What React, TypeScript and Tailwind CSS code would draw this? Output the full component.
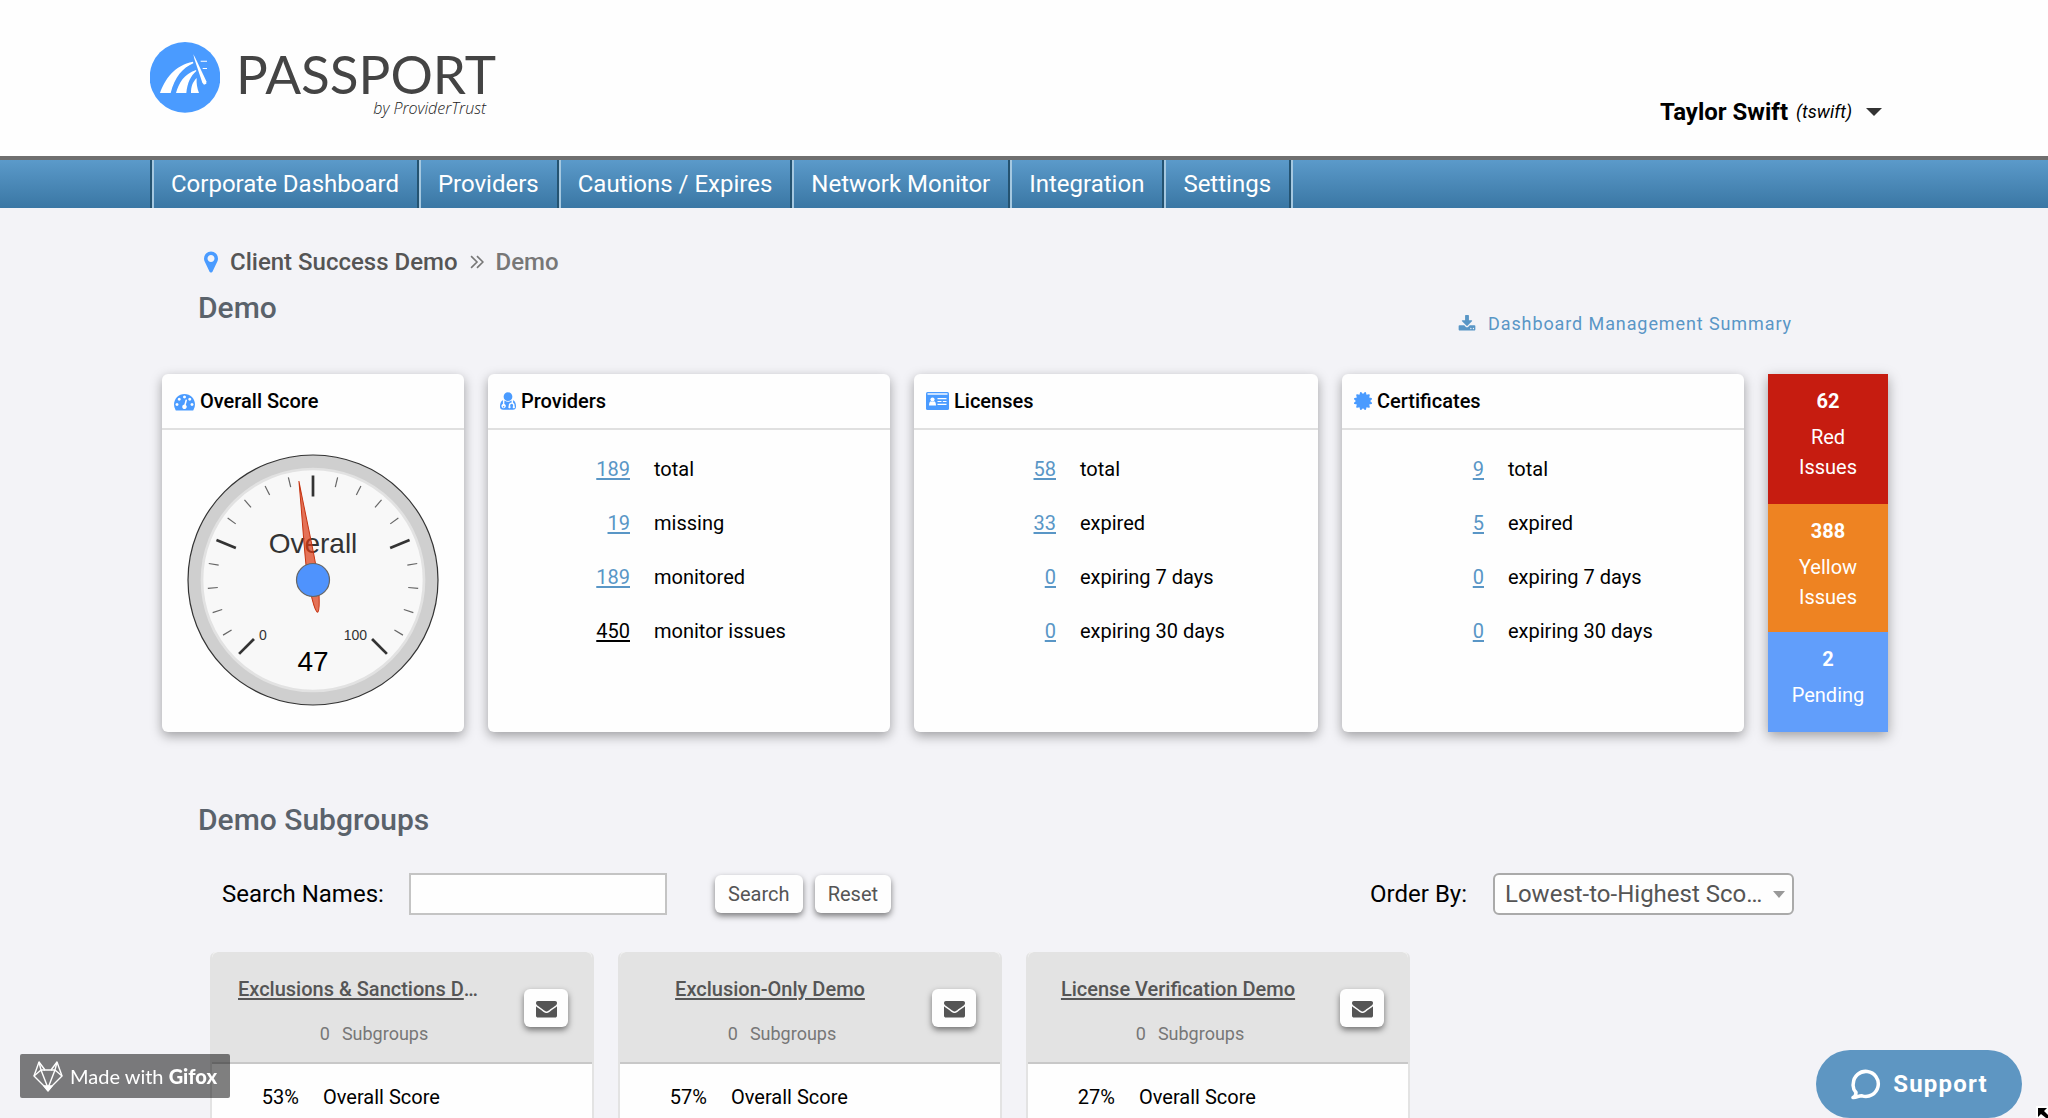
import { useState } from 'react';

interface IconProps {
  className?: string;
  path: string;
  viewBox?: string;
}

interface Stat {
  value: string;
  label: string;
  dark?: boolean;
}

interface StatCardProps {
  title: string;
  icon: React.ReactNode;
  stats: Stat[];
}

interface Subgroup {
  name: string;
  subgroups: number;
  score: number;
}

const icons = {
  gauge:
    'M384 1152q0-53-37.5-90.5t-90.5-37.5-90.5 37.5-37.5 90.5 37.5 90.5 90.5 37.5 90.5-37.5 37.5-90.5zm192-448q0-53-37.5-90.5t-90.5-37.5-90.5 37.5-37.5 90.5 37.5 90.5 90.5 37.5 90.5-37.5 37.5-90.5zm428 481l101-382q6-26-7.5-48.5t-38.5-29.5-48 6.5-30 39.5l-101 382q-60 5-107 43.5t-63 98.5q-20 77 20 146t117 89 146-20 89-117q16-60-6-117t-72-91zm660-33q0-53-37.5-90.5t-90.5-37.5-90.5 37.5-37.5 90.5 37.5 90.5 90.5 37.5 90.5-37.5 37.5-90.5zm-640-640q0-53-37.5-90.5t-90.5-37.5-90.5 37.5-37.5 90.5 37.5 90.5 90.5 37.5 90.5-37.5 37.5-90.5zm448 192q0-53-37.5-90.5t-90.5-37.5-90.5 37.5-37.5 90.5 37.5 90.5 90.5 37.5 90.5-37.5 37.5-90.5zm320 448q0 261-141 483-19 29-54 29h-1402q-35 0-54-29-141-221-141-483 0-182 71-348t191-286 286-191 348-71 348 71 286 191 191 286 71 348z',
  doctor:
    'M576 1408q0 26-19 45t-45 19-45-19-19-45 19-45 45-19 45 19 19 45zm1024-8q0 121-73 191t-194 70h-874q-121 0-194-70t-73-191q0-68 5.5-131t24-138 47.5-132.5 81-103 120-60.5q-22 52-22 120v203q-58 20-93 70t-35 111q0 80 56 136t136 56 136-56 56-136q0-61-35.5-111t-92.5-70v-203q0-62 25-93 132 104 295 104t295-104q25 31 25 93v64q-106 0-181 75t-75 181v89q-32 29-32 71 0 40 28 68t68 28 68-28 28-68q0-42-32-71v-89q0-52 38-90t90-38 90 38 38 90v89q-32 29-32 71 0 40 28 68t68 28 68-28 28-68q0-42-32-71v-89q0-68-34.5-127.5t-93.5-93.5q0-10 .5-42.5t0-48-2.5-41.5-7-47-13-40q68 15 120 60.5t81 103 47.5 132.5 24 138 5.5 131zm-320-888q0 159-112.5 271.5t-271.5 112.5-271.5-112.5-112.5-271.5 112.5-271.5 271.5-112.5 271.5 112.5 112.5 271.5z',
  certificate:
    'M1504 896l138 135q30 28 20 70-12 41-52 51l-188 48 53 186q12 41-19 70-29 31-70 19l-186-53-48 188q-10 40-51 52-12 2-19 2-31 0-51-22l-135-138-135 138q-28 30-70 20-41-11-51-52l-48-188-186 53q-41 12-70-19-31-29-19-70l53-186-188-48q-40-10-52-51-10-42 20-70l138-135-138-135q-30-28-20-70 12-41 52-51l188-48-53-186q-12-41 19-70 29-31 70-19l186 53 48-188q10-41 51-51 41-12 70 19l135 139 135-139q29-30 70-19 41 10 51 51l48 188 186-53q41-12 70 19 31 29 19 70l-53 186 188 48q40 10 52 51 10 42-20 70z',
  download:
    'M1344 1344q0-26-19-45t-45-19-45 19-19 45 19 45 45 19 45-19 19-45zm256 0q0-26-19-45t-45-19-45 19-19 45 19 45 45 19 45-19 19-45zm128-224v320q0 40-28 68t-68 28h-1472q-40 0-68-28t-28-68v-320q0-40 28-68t68-28h465l135 136q58 56 136 56t136-56l136-136h464q40 0 68 28t28 68zm-325-569q17 41-14 70l-448 448q-18 19-45 19t-45-19l-448-448q-31-29-14-70 17-39 59-39h256v-448q0-26 19-45t45-19h256q26 0 45 19t19 45v448h256q42 0 59 39z',
  marker:
    'M1152 640q0-106-75-181t-181-75-181 75-75 181 75 181 181 75 181-75 75-181zm256 0q0 109-33 179l-364 774q-16 33-47.5 52t-67.5 19-67.5-19-46.5-52l-365-774q-33-70-33-179 0-212 150-362t362-150 362 150 150 362z',
  envelope:
    'M1792 710v794q0 66-47 113t-113 47h-1472q-66 0-113-47t-47-113v-794q44 49 101 87 362 246 497 345 57 42 92.5 65.5t94.5 48 110 24.5h2q51 0 110-24.5t94.5-48 92.5-65.5q170-123 498-345 57-39 100-87zm0-294q0 79-49 151t-122 123q-376 261-468 325-10 7-42.5 31t-54 38.5-52 32.5-57.5 27-50 9h-2q-23 0-50-9t-57.5-27-52-32.5-54-38.5-42.5-31q-91-64-262-182.5t-205-142.5q-62-42-117-115.5t-55-136.5q0-78 41.5-130t118.5-52h1472q65 0 112.5 47t47.5 113z',
};

const navItems = [
  'Corporate Dashboard',
  'Providers',
  'Cautions / Expires',
  'Network Monitor',
  'Integration',
  'Settings',
];

const providerStats: Stat[] = [
  { value: '189', label: 'total' },
  { value: '19', label: 'missing' },
  { value: '189', label: 'monitored' },
  { value: '450', label: 'monitor issues', dark: true },
];

const licenseStats: Stat[] = [
  { value: '58', label: 'total' },
  { value: '33', label: 'expired' },
  { value: '0', label: 'expiring 7 days' },
  { value: '0', label: 'expiring 30 days' },
];

const certificateStats: Stat[] = [
  { value: '9', label: 'total' },
  { value: '5', label: 'expired' },
  { value: '0', label: 'expiring 7 days' },
  { value: '0', label: 'expiring 30 days' },
];

const subgroups: Subgroup[] = [
  { name: 'Exclusions & Sanctions Demo', subgroups: 0, score: 53 },
  { name: 'Exclusion-Only Demo', subgroups: 0, score: 57 },
  { name: 'License Verification Demo', subgroups: 0, score: 27 },
];

function Icon({ className, path, viewBox = '0 0 1792 1792' }: IconProps) {
  return (
    <svg className={className} viewBox={viewBox} fill="currentColor" aria-hidden="true">
      <path fillRule="evenodd" d={path} />
    </svg>
  );
}

function IdCardIcon() {
  return (
    <svg className="h-[18px] w-[23px]" viewBox="0 0 23 18" aria-hidden="true">
      <rect width="23" height="18" rx="1.5" fill="#4a9bff" />
      <g fill="#fff">
        <rect x="1.5" y="1.3" width="20" height="1.4" />
        <circle cx="6.5" cy="7.6" r="2.1" />
        <path d="M3 13.6c0-3 1-4.4 2-4.4.8.8 2.2.8 3 0 1 0 2 1.4 2 4.4z" />
        <path d="M11.5 6h9v1.2h-9zM11.5 8.9h4v1.2h-4zM16.8 8.9h3.7v1.2h-3.7zM11.5 11.8h9V13h-9z" />
      </g>
    </svg>
  );
}

function Logo() {
  return (
    <a href="#" className="flex items-start gap-4 text-[#444]">
      <svg className="mt-[42px] h-[71px] w-[70px]" viewBox="60 66 210 213" aria-hidden="true">
        <circle cx="165" cy="172" r="106" fill="#4a9bff" />
        <g fill="#fff">
          <path d="M90 219C104 178 134 135 189 125L190 130C158 143 134 172 122 219z" />
          <path d="M138 219C146 190 162 162 198 150L199 153C182 168 172 188 169 219z" />
          <path d="M183 219C183 200 188 186 200 174C199 190 201 204 207 219z" />
          <path d="M190 103L196 114L229 184L229 191L222 194L217 188L193 116z" />
          <path d="M212 122h19v3h-19zM218 144h13v3h-13z" />
        </g>
      </svg>
      <span className="flex flex-col items-end pt-[47px]">
        <span className="font-['Lato'] text-[53px] leading-[54px]">PASSPORT</span>
        <span className="mr-[10px] font-['Open_Sans'] text-base leading-[14px] font-light italic text-[#222]">
          by ProviderTrust
        </span>
      </span>
    </a>
  );
}

function Header() {
  return (
    <header className="bg-[#fefefe]">
      <div className="mx-auto flex h-[156px] max-w-[1748px] items-start justify-between">
        <Logo />
        <button className="mt-24 mr-4 flex items-center text-black">
          <span className="text-2xl leading-8 font-bold">Taylor Swift</span>
          <span className="ml-2 text-lg italic">(tswift)</span>
          <svg className="ml-[14px] h-2 w-4" viewBox="0 0 16 8" aria-hidden="true">
            <path d="M0 0h16l-8 8z" fill="#333" />
          </svg>
        </button>
      </div>
      <nav className="border-t-4 border-[#6f6f6f] bg-linear-to-b from-[#5b9aca] to-[#3a77a4]">
        <ul className="mx-auto flex h-12 max-w-[1748px] border-l-2 border-[#245371]">
          {navItems.map((item) => (
            <li key={item} className="border-r-2 border-l-2 border-r-[#245371] border-l-[#a5c8e0]">
              <a href="#" className="block pr-[18px] pl-[17px] text-2xl leading-[48px] text-white">
                {item}
              </a>
            </li>
          ))}
          <li className="border-l-2 border-[#a5c8e0]" />
        </ul>
      </nav>
    </header>
  );
}

function ScoreGauge({ score }: { score: number }) {
  const ticks = Array.from({ length: 21 }, (_, i) => i);

  return (
    <svg
      className="mx-auto mt-6 block h-[252px] w-[252px]"
      viewBox="0 0 252 252"
      fontFamily="Liberation Sans, Arial, sans-serif"
    >
      <circle cx="126" cy="126" r="125" fill="#cfcfcf" stroke="#333" strokeWidth="1.2" />
      <circle cx="126" cy="126" r="111" fill="#f8f8f8" stroke="#e2e2e2" strokeWidth="2.7" />
      {ticks.map((i) => {
        const major = i % 5 === 0;
        return (
          <line
            key={i}
            x1="126"
            x2="126"
            y1={major ? 21.5 : 20.5}
            y2={major ? 42.5 : 30.5}
            stroke={major ? '#333' : '#666'}
            strokeWidth={major ? 2.7 : 1.2}
            transform={`rotate(${i * 13.5 - 135} 126 126)`}
          />
        );
      })}
      <text x="126" y="99" fontSize="28" textAnchor="middle" fill="#333">Overall</text>
      <text x="72" y="186" fontSize="14" fill="#333">0</text>
      <text x="180" y="186" fontSize="14" textAnchor="end" fill="#333">100</text>
      <text x="126" y="217" fontSize="28" textAnchor="middle" fill="#000">{score}</text>
      <path
        d="M0-100C2-60 5-25 5-8C5 8 3 32 0 32.5C-3 32-5 8-5-8C-5-25-2-60 0-100z"
        transform={`translate(126 126) rotate(${score * 2.7 - 135})`}
        fill="#dc3912"
        fillOpacity="0.7"
        stroke="#c63310"
      />
      <circle cx="126" cy="126" r="16.5" fill="#4f93fd" stroke="#666" strokeWidth="1.2" />
    </svg>
  );
}

const cardClass = 'rounded-md bg-[#fefefe] shadow-[0_4px_12px_rgba(0,0,0,0.35)]';
const cardHeadClass =
  'flex h-14 items-center gap-[5px] border-b-2 border-[#e0e0e0] px-3 text-xl font-medium text-black';

function StatCard({ title, icon, stats }: StatCardProps) {
  return (
    <section className={cardClass}>
      <h2 className={cardHeadClass}>
        {icon}
        {title}
      </h2>
      <table className="mt-3 text-xl text-black">
        <tbody>
          {stats.map((stat) => (
            <tr key={stat.label} className="h-[54px]">
              <td className="w-[142px] text-right">
                <a
                  href="#"
                  className={`underline decoration-2 underline-offset-2 ${stat.dark ? 'text-black' : 'text-[#5996c6]'}`}
                >
                  {stat.value}
                </a>
              </td>
              <td className="pl-6">{stat.label}</td>
            </tr>
          ))}
        </tbody>
      </table>
    </section>
  );
}

function Overview() {
  return (
    <div className="mt-9 grid h-[358px] grid-cols-[302fr_402fr_404fr_402fr_120fr] gap-6">
      <section className={cardClass}>
        <h2 className={cardHeadClass}>
          <Icon className="h-[21px] w-[21px] text-[#4a9bff]" path={icons.gauge} />
          Overall Score
        </h2>
        <ScoreGauge score={47} />
      </section>
      <StatCard
        title="Providers"
        icon={<Icon className="h-[18px] w-4 text-[#4a9bff]" path={icons.doctor} viewBox="192 128 1408 1536" />}
        stats={providerStats}
      />
      <StatCard title="Licenses" icon={<IdCardIcon />} stats={licenseStats} />
      <StatCard
        title="Certificates"
        icon={<Icon className="h-[18px] w-[18px] text-[#4a9bff]" path={icons.certificate} viewBox="128 128 1536 1536" />}
        stats={certificateStats}
      />
      <div className="flex flex-col text-center text-xl leading-[30px] text-white shadow-[0_4px_12px_rgba(0,0,0,0.35)]">
        <div className="bg-[#c61c10] px-6 pt-3 pb-[22px]">
          <strong className="mb-[6px] block">62</strong>
          Red Issues
        </div>
        <div className="bg-[#ee8322] px-6 pt-3 pb-5">
          <strong className="mb-[6px] block">388</strong>
          Yellow Issues
        </div>
        <div className="flex-1 bg-[#619efb] px-4 pt-3">
          <strong className="mb-[6px] block">2</strong>
          Pending
        </div>
      </div>
    </div>
  );
}

const buttonClass =
  'h-[38px] rounded-md bg-[#fefefe] text-[#555] shadow-[0_3px_6px_rgba(0,0,0,0.5)]';

function SubgroupCard({ group }: { group: Subgroup }) {
  return (
    <article className="w-[384px] rounded-t-md border-x-2 border-[#e3e3e3] bg-[#fefefe]">
      <div className="flex h-28 items-center justify-between rounded-t-md border-b-2 border-[#c8c8c8] bg-[#e3e3e3] pr-6 pl-[26px]">
        <div className="w-[248px] pt-[9px] text-center">
          <h3 className="truncate text-xl leading-[30px] font-medium text-[#555]">
            <a href="#" className="underline decoration-2 underline-offset-2">{group.name}</a>
          </h3>
          <p className="mt-[15px] ml-6 flex justify-center gap-3 text-lg leading-[30px] text-[#777]">
            <span>{group.subgroups}</span>
            <span>Subgroups</span>
          </p>
        </div>
        <button aria-label="Send message" className={`${buttonClass} mt-[2px] flex w-11 items-center justify-center`}>
          <Icon className="h-[21px] w-[21px]" path={icons.envelope} />
        </button>
      </div>
      <div className="flex h-[54px] items-center gap-6 pt-3 text-xl text-black">
        <span className="w-[87px] text-right">{group.score}%</span>
        <span>Overall Score</span>
      </div>
    </article>
  );
}

function Subgroups() {
  const [search, setSearch] = useState('');
  const [order, setOrder] = useState('asc');

  return (
    <section className="mt-[70px]">
      <h2 className="ml-9 text-[30px] leading-9 font-medium text-[#5a626b]">Demo Subgroups</h2>
      <div className="mt-[34px] mr-[94px] ml-[60px] flex h-[44px] items-center text-2xl text-black">
        <label htmlFor="search">Search Names:</label>
        <input
          id="search"
          type="text"
          value={search}
          onChange={(e) => setSearch(e.target.value)}
          className="ml-[25px] h-[42px] w-[258px] border-2 border-[#c4c4c4] bg-[#fefefe] px-2"
        />
        <button className={`${buttonClass} ml-12 w-[88px] text-xl`}>Search</button>
        <button onClick={() => setSearch('')} className={`${buttonClass} ml-3 w-[76px] text-xl`}>
          Reset
        </button>
        <label htmlFor="order" className="ml-auto">Order By:</label>
        <div className="relative ml-[26px]">
          <select
            id="order"
            value={order}
            onChange={(e) => setOrder(e.target.value)}
            className="block h-[42px] w-[301px] appearance-none truncate rounded-md border-2 border-[#aaa] bg-[#fefefe] pr-7 pl-[10px] text-[#555]"
          >
            <option value="asc">Lowest-to-Highest Score</option>
            <option value="desc">Highest-to-Lowest Score</option>
          </select>
          <svg
            className="pointer-events-none absolute top-[18px] right-[9px] h-[7px] w-3"
            viewBox="0 0 12 7"
            aria-hidden="true"
          >
            <path d="M0 0h12l-6 7z" fill="#999" />
          </svg>
        </div>
      </div>
      <div className="mt-9 ml-12 flex gap-6">
        {subgroups.map((group) => (
          <SubgroupCard key={group.name} group={group} />
        ))}
      </div>
    </section>
  );
}

function GifoxBadge() {
  return (
    <div className="fixed bottom-5 left-5 flex h-11 w-[210px] items-center rounded-xs bg-black/50 pl-[13px] font-['Lato'] text-xl text-white">
      <svg
        className="mr-[7px] h-8 w-[30px]"
        viewBox="0 0 30 32"
        fill="none"
        stroke="#fff"
        strokeWidth="1.4"
        strokeLinejoin="round"
        aria-hidden="true"
      >
        <path d="M6 2L1 16L15 30L29 16L24 2L18 10H12z" />
        <path d="M6 2L8 10L12 10M24 2L22 10L18 10M8 10L1 16M22 10L29 16M8 10L15 28L22 10" />
        <path d="M11 26h8l-4 5z" fill="#fff" />
      </svg>
      <span>
        Made with <b className="font-black">Gifox</b>
      </span>
    </div>
  );
}

function SupportButton() {
  return (
    <button className="fixed right-[26px] bottom-0 flex h-[68px] w-[206px] items-center justify-center gap-3 rounded-full bg-[#5e96c2] text-2xl font-bold tracking-wider text-white">
      <svg
        className="h-[31px] w-[31px]"
        viewBox="0 0 31 31"
        fill="none"
        stroke="#fff"
        strokeWidth="3.5"
        strokeLinejoin="round"
        aria-hidden="true"
      >
        <path d="M3 28.5c2-1 3-3 3-5C3 20 3 16 3.3 14.5A12.5 12.5 0 1 1 12 26.8C9 26.5 6 29 3 28.5z" />
      </svg>
      Support
    </button>
  );
}

function Pointer() {
  return (
    <svg className="pointer-events-none fixed right-0 bottom-0 h-3 w-3" viewBox="0 0 12 12" aria-hidden="true">
      <path d="M0 0h12v12H0z" fill="#fff" />
      <path d="M2 2h9L8 5l4 4v3h-2L5 8l-3 3z" fill="#000" />
    </svg>
  );
}

export default function App() {
  return (
    <div className="h-screen overflow-hidden bg-[#f3f3f7] font-['Roboto',sans-serif]">
      <Header />
      <main className="mx-auto max-w-[1728px] pl-[2px]">
        <div className="mr-24 ml-9 flex items-end justify-between pt-9">
          <div>
            <div className="flex h-9 items-center pl-[6px] text-2xl font-medium text-[#777]">
              <Icon className="h-[22px] w-[14px] text-[#4a9bff]" path={icons.marker} viewBox="384 128 1024 1536" />
              <a href="#" className="ml-3 text-[#555]">Client Success Demo</a>
              <svg
                className="mx-3 h-[14px] w-[14px]"
                viewBox="0 0 13 13"
                fill="none"
                stroke="#777"
                strokeWidth="1.5"
                aria-hidden="true"
              >
                <path d="M1 1l5.5 5.5L1 12M6.5 1L12 6.5 6.5 12" />
              </svg>
              <span>Demo</span>
            </div>
            <h1 className="mt-2 mb-[10px] text-[30px] leading-[40px] font-medium text-[#5a626b]">Demo</h1>
          </div>
          <a href="#" className="flex items-center gap-3 text-lg tracking-wider text-[#5996c6]">
            <Icon className="h-[18px] w-[18px]" path={icons.download} />
            Dashboard Management Summary
          </a>
        </div>
        <Overview />
        <Subgroups />
      </main>
      <GifoxBadge />
      <SupportButton />
      <Pointer />
    </div>
  );
}
